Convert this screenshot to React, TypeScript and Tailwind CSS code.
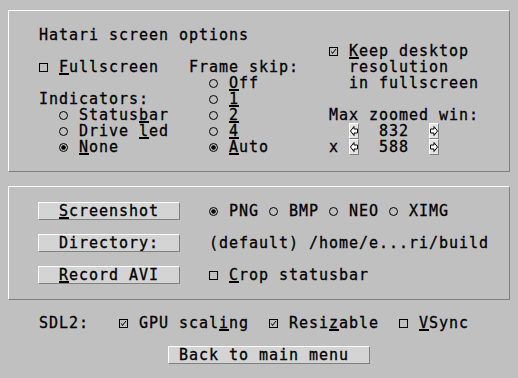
import React from "react";

const edge = "border border-t-white border-l-white border-r-[#808080] border-b-[#808080]";

function CheckBox({ on }: { on?: boolean }) {
  return (
    <svg width="10" height="16" viewBox="0 0 10 16" className="shrink-0">
      <rect x="0.5" y="4.5" width="8" height="8" fill="none" stroke="#000" />
      {on && <polyline points="2.5,8.5 3.5,10.5 7,6" fill="none" stroke="#000" />}
    </svg>
  );
}

function Radio({ on }: { on?: boolean }) {
  return (
    <svg width="10" height="16" viewBox="0 0 10 16" className="shrink-0">
      <circle cx="4.5" cy="8.5" r="4" fill="none" stroke="#000" />
      {on && <circle cx="4.5" cy="8.5" r="2.3" fill="#000" />}
    </svg>
  );
}

function Arrow({ left, className }: { left?: boolean; className: string }) {
  return (
    <div className={`${className} flex items-center justify-center border-l border-t border-l-white border-t-white border-r border-b border-r-[#808080] border-b-[#808080] bg-[#e4e4e4]`}>
      <svg width="8" height="14" viewBox="0 0 8 14" className={left ? "" : "-scale-x-100"}>
        <polygon points="0.5,7 4,2.5 4,5 7.5,5 7.5,9 4,9 4,11.5" fill="#fff" stroke="#000" />
      </svg>
    </div>
  );
}

function Label({ className, children }: { className: string; children: React.ReactNode }) {
  return <span className={`${className} flex`}>{children}</span>;
}

const u = "underline decoration-[2px] underline-offset-[1px]";

export default function App() {
  return (
    <div className="w-[518px] h-[378px] overflow-hidden bg-[#c0c0c0] pl-[8px] pt-[10px] text-black whitespace-nowrap font-['DejaVu_Sans_Mono','Liberation_Mono',monospace] text-[15px] leading-[16px] tracking-[0.97px] [-webkit-text-stroke:0.3px_#000]">
      {/* screen options */}
      <div className={`w-[502px] ${edge}`}>
        <div className="grid grid-cols-[repeat(50,10px)] grid-rows-[repeat(10,16px)]">
          <span className="col-start-4 row-start-2">Hatari screen options</span>

          <Label className="col-start-33 row-start-3">
            <CheckBox on />
            <span className="ml-[10px]"><u className={u}>K</u>eep desktop</span>
          </Label>
          <span className="col-start-35 row-start-4">resolution</span>
          <span className="col-start-35 row-start-5">in fullscreen</span>

          <Label className="col-start-4 row-start-4">
            <CheckBox />
            <span className="ml-[10px]"><u className={u}>F</u>ullscreen</span>
          </Label>

          <span className="col-start-19 row-start-4">Frame skip:</span>
          <Label className="col-start-21 row-start-5">
            <Radio />
            <span className="ml-[10px]"><u className={u}>O</u>ff</span>
          </Label>
          <Label className="col-start-21 row-start-6">
            <Radio />
            <span className="ml-[10px]"><u className={u}>1</u></span>
          </Label>
          <Label className="col-start-21 row-start-7">
            <Radio />
            <span className="ml-[10px]"><u className={u}>2</u></span>
          </Label>
          <Label className="col-start-21 row-start-8">
            <Radio />
            <span className="ml-[10px]"><u className={u}>4</u></span>
          </Label>
          <Label className="col-start-21 row-start-9">
            <Radio on />
            <span className="ml-[10px]"><u className={u}>A</u>uto</span>
          </Label>

          <span className="col-start-4 row-start-6">Indicators:</span>
          <Label className="col-start-6 row-start-7">
            <Radio />
            <span className="ml-[10px]">Status<u className={u}>b</u>ar</span>
          </Label>
          <Label className="col-start-6 row-start-8">
            <Radio />
            <span className="ml-[10px]">Drive <u className={u}>l</u>ed</span>
          </Label>
          <Label className="col-start-6 row-start-9">
            <Radio on />
            <span className="ml-[10px]"><u className={u}>N</u>one</span>
          </Label>

          <span className="col-start-33 row-start-7">Max zoomed win:</span>
          <Arrow left className="col-start-35 row-start-8" />
          <span className="col-start-38 row-start-8">832</span>
          <Arrow className="col-start-43 row-start-8" />
          <span className="col-start-33 row-start-9">x</span>
          <Arrow left className="col-start-35 row-start-9" />
          <span className="col-start-38 row-start-9">588</span>
          <Arrow className="col-start-43 row-start-9" />
        </div>
      </div>

      {/* screenshot / recording */}
      <div className={`mt-[14px] w-[502px] ${edge}`}>
        <div className="grid grid-cols-[repeat(50,10px)] grid-rows-[repeat(7,16px)]">
          <div className={`col-start-4 col-span-14 row-start-2 -m-px ${edge} bg-[#d4d4d4] pl-[20px]`}>
            <u className={u}>S</u>creenshot
          </div>
          <Label className="col-start-21 row-start-2">
            <Radio on />
            <span className="ml-[10px]">PNG</span>
          </Label>
          <Label className="col-start-27 row-start-2">
            <Radio />
            <span className="ml-[10px]">BMP</span>
          </Label>
          <Label className="col-start-33 row-start-2">
            <Radio />
            <span className="ml-[10px]">NEO</span>
          </Label>
          <Label className="col-start-39 row-start-2">
            <Radio />
            <span className="ml-[10px]">XIMG</span>
          </Label>

          <div className={`col-start-4 col-span-14 row-start-4 -m-px ${edge} bg-[#d4d4d4] pl-[20px]`}>
            Directory:
          </div>
          <span className="col-start-21 row-start-4">(default) /home/e...ri/build</span>

          <div className={`col-start-4 col-span-14 row-start-6 -m-px ${edge} bg-[#d4d4d4] pl-[20px]`}>
            <u className={u}>R</u>ecord AVI
          </div>
          <Label className="col-start-21 row-start-6">
            <CheckBox />
            <span className="ml-[10px]"><u className={u}>C</u>rop statusbar</span>
          </Label>
        </div>
      </div>

      {/* SDL2 options and exit */}
      <div className="mt-[15px] ml-px grid grid-cols-[repeat(50,10px)] grid-rows-[repeat(3,16px)]">
        <span className="col-start-4 row-start-1">SDL2:</span>
        <Label className="col-start-12 row-start-1">
          <CheckBox on />
          <span className="ml-[10px]">GPU scal<u className={u}>i</u>ng</span>
        </Label>
        <Label className="col-start-27 row-start-1">
          <CheckBox on />
          <span className="ml-[10px]">Resi<u className={u}>z</u>able</span>
        </Label>
        <Label className="col-start-40 row-start-1">
          <CheckBox />
          <span className="ml-[10px]"><u className={u}>V</u>Sync</span>
        </Label>
        <div className={`col-start-17 col-span-20 row-start-3 -m-px ${edge} bg-[#d4d4d4] pl-[10px]`}>
          Back to main menu
        </div>
      </div>
    </div>
  );
}
